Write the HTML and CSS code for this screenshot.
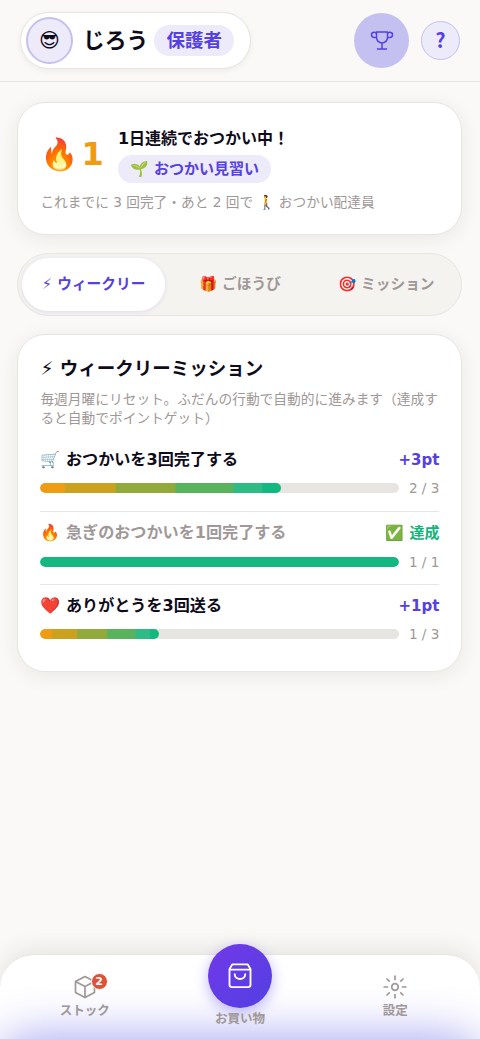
FILE: index.html
```html
<!DOCTYPE html>
<html lang="ja">
<head>
<meta charset="utf-8">
<meta name="viewport" content="width=device-width, initial-scale=1">
<title>ウィークリーミッション</title>
<link rel="stylesheet" href="styles.css">
</head>
<body>
<div class="app">
  <header class="header">
    <div class="profile">
      <span class="avatar">😎︎</span>
      <span class="name">じろう</span>
      <span class="role">保護者</span>
    </div>
    <div class="actions">
      <button class="trophy" aria-label="トロフィー">
        <svg width="24" height="24" viewBox="0 0 24 24" fill="none" stroke="currentColor" stroke-width="1.5" stroke-linecap="round" stroke-linejoin="round"><path d="M6.500 3h11v5.500a5.500 5.500 0 0 1-11 0zM12 14.500v5M7.500 20h9M6.500 8.500H4.200A2.700 2.700 0 0 1 1.500 5.800c0-1.600 1.300-2.500 2.700-2.500 1.400 0 2.200.7 2.200 2M17.600 5.300c0-1.300.8-2 2.100-2 1.600 0 2.800.9 2.800 2.500a2.700 2.700 0 0 1-2.700 2.700h-2.200"/></svg>
      </button>
      <button class="help">?</button>
    </div>
  </header>
  <main class="main">
    <section class="card streak">
      <div class="streak-row">
        <div class="streak-count"><span class="flame">🔥</span><span>1</span></div>
        <div class="streak-info">
          <div class="streak-title">1日連続でおつかい中！</div>
          <span class="rank">🌱 おつかい見習い</span>
        </div>
      </div>
      <p class="note">これまでに 3 回完了・あと 2 回で 🚶 おつかい配達員</p>
    </section>
    <nav class="tabs">
      <button class="tab active">⚡︎ ウィークリー</button>
      <button class="tab">🎁 ごほうび</button>
      <button class="tab">🎯 ミッション</button>
    </nav>
    <section class="card weekly">
      <h1 class="title">⚡︎ ウィークリーミッション</h1>
      <p class="desc">毎週月曜にリセット。ふだんの行動で自動的に進みます（達成すると自動でポイントゲット）</p>
      <ul class="missions">
        <li class="mission">
          <div class="mission-head"><span>🛒 おつかいを3回完了する</span><span class="points">+3pt</span></div>
          <div class="progress"><div class="track"><div class="fill" style="width:67%"></div></div><span class="count">2 / 3</span></div>
        </li>
        <li class="mission done">
          <div class="mission-head"><span>🔥 急ぎのおつかいを1回完了する</span><span class="points">✅ 達成</span></div>
          <div class="progress"><div class="track"><div class="fill" style="width:100%"></div></div><span class="count">1 / 1</span></div>
        </li>
        <li class="mission">
          <div class="mission-head"><span>❤️ ありがとうを3回送る</span><span class="points">+1pt</span></div>
          <div class="progress"><div class="track"><div class="fill" style="width:33%"></div></div><span class="count">1 / 3</span></div>
        </li>
      </ul>
    </section>
  </main>
  <nav class="bottom">
    <a class="nav-item">
      <span class="nav-icon">
        <svg width="24" height="24" viewBox="0 0 24 24" fill="none" stroke="currentColor" stroke-width="1.700" stroke-linecap="round" stroke-linejoin="round"><path d="M12 1.500 21.500 6.500v11L12 22.500 2.500 17.500v-11zM2.500 6.500l9.500 5 9.500-5M12 11.500v11"/></svg>
        <span class="badge">2</span>
      </span>
      <span>ストック</span>
    </a>
    <a class="nav-item shop">
      <span class="shop-circle">
        <svg width="28" height="28" viewBox="0 0 24 24" fill="none" stroke="currentColor" stroke-width="1.600" stroke-linecap="round" stroke-linejoin="round"><path d="M5.500 2h13L21 6v13.500a2 2 0 0 1-2 2H5a2 2 0 0 1-2-2V6zM3 6.500h18M7.500 10.500c.2 5.400 8.800 5.400 9 0"/></svg>
      </span>
      <span>お買い物</span>
    </a>
    <a class="nav-item">
      <span class="nav-icon">
        <svg width="24" height="24" viewBox="0 0 24 24" fill="none" stroke="currentColor" stroke-width="1.700" stroke-linecap="round"><circle cx="12" cy="12" r="3.300"/><path d="M12 1.200v3.300M12 19.500v3.300M1.200 12H4.500M19.500 12h3.300M4 4l2.200 2.200M17.800 17.800L20 20M4 20l2.200-2.200M17.800 6.200L20 4"/></svg>
      </span>
      <span>設定</span>
    </a>
    <span class="glow"></span>
  </nav>
</div>
</body>
</html>
```
FILE: styles.css
```css
* { box-sizing: border-box; }
body { margin: 0; background: #faf9f7; color: #100b1a; font-family: "DejaVu Sans", "Noto Sans CJK JP", sans-serif; }
button { border: 0; margin: 0; padding: 0; background: none; font: inherit; color: inherit; }
svg { display: block; }
.app { height: 1039px; display: flex; flex-direction: column; overflow: hidden; }

.header { height: 82px; flex: none; display: flex; align-items: center; justify-content: space-between; padding: 0 20px; border-bottom: 1px solid #e7e5e2; }
.profile { height: 57px; width: 231px; display: flex; align-items: center; padding: 0 5px; background: #fff; border: 1px solid #e7e5e2; border-radius: 29px; box-shadow: 0 2px 6px rgba(40, 35, 30, .06); }
.avatar { width: 47px; height: 47px; border: 2px solid #c4c1f1; border-radius: 50%; background: #edeafa; display: grid; place-items: center; padding-bottom: 2px; font-size: 20px; line-height: 1; }
.name { margin-left: 10px; font-size: 21.800px; font-weight: 700; line-height: 1; white-space: nowrap; }
.role { margin-left: 6px; height: 31px; padding: 0 12px; border-radius: 16px; background: #edeafa; color: #5540e3; font-size: 18.500px; line-height: 31px; font-weight: 600; white-space: nowrap; }
.actions { display: flex; align-items: center; gap: 12px; }
.trophy { width: 55px; height: 55px; border-radius: 50%; background: #c4c1f1; color: #5540e3; display: grid; place-items: center; }
.help { width: 39px; height: 39px; padding-bottom: 2px; border: 1px solid #c4c1f1; border-radius: 50%; background: #edeafa; color: #5540e3; font: 700 20px "Noto Sans CJK JP", sans-serif; line-height: 1; }

.main { flex: 1; display: flex; flex-direction: column; gap: 18px; padding: 20px 17.600px 0 17.400px; }
.card { background: #fff; border: 1px solid #e7e5e2; border-radius: 28px; box-shadow: 0 4px 20px rgba(40, 35, 30, .08); }
.streak { height: 132.500px; flex: none; padding: 25px 22px 0; }
.streak-row { display: flex; gap: 16px; height: 56px; }
.streak-count { display: flex; align-items: center; gap: 2px; width: 61.500px; height: 52px; font-size: 32px; line-height: 1; font-weight: 700; color: #f09c12; }
.flame { font-size: 31px; }
.streak-title { font-size: 16px; font-weight: 700; line-height: 22px; margin-bottom: 5px; }
.rank { display: block; width: max-content; height: 28px; line-height: 28px; padding: 0 12px; border-radius: 14px; background: #edeafa; color: #5540e3; font-size: 15px; font-weight: 700; }
.note { margin: 9px 0 0; font-size: 13.700px; line-height: 19px; color: #a09797; white-space: nowrap; }

.tabs { height: 63.500px; flex: none; display: flex; gap: 4px; padding: 4px; background: #f4f3f0; border: 1px solid #e7e5e2; border-radius: 32px; }
.tab { flex: 1; padding-bottom: 4px; border-radius: 28px; font-size: 14.700px; font-weight: 700; color: #a09797; white-space: nowrap; }
.tab.active { background: #fff; color: #5540e3; box-shadow: 0 1px 4px rgba(85, 64, 227, .13); }

.weekly { height: 338px; flex: none; padding: 19.500px 22px 0; }
.title { margin: 0; font-size: 18.500px; line-height: 28px; font-weight: 700; }
.desc { margin: 7px 0 11px; font-size: 13.720px; line-height: 19px; color: #a09797; }
.missions { list-style: none; margin: 0; padding: 0; }
.mission { height: 72.500px; padding-top: 9px; }
.mission + .mission { border-top: 1px solid #e7e5e2; }
.mission-head { display: flex; justify-content: space-between; height: 24px; line-height: 24px; font-size: 16.100px; font-weight: 700; white-space: nowrap; }
.points { color: #5540e3; font-size: 15px; }
.done .mission-head { color: #a09797; }
.done .points { color: #14b37c; }
.progress { display: flex; align-items: center; gap: 10px; height: 20px; margin-top: 6.500px; }
.track { flex: 1; height: 10px; border-radius: 5px; background: #e7e5e2; overflow: hidden; }
.fill { height: 100%; border-radius: 5px; background: linear-gradient(90deg, #f09c12 0 10%, #cba11e 10.500% 31%, #92aa3b 31.500% 56%, #59b35d 56.500% 80%, #2ebb86 80.500% 92%, #12b880 92.500%); }
.done .fill { background: #12b880; }
.count { font-size: 13.600px; color: #a09797; }

.bottom { position: relative; height: 85px; flex: none; display: grid; grid-template-columns: repeat(3, 1fr); padding: 0 7px; background: #fff; border-top: 1px solid #e7e5e2; border-radius: 34px 34px 0 0; box-shadow: 0 -4px 24px rgba(40, 35, 30, .1); }
.nav-item { position: relative; z-index: 1; display: flex; flex-direction: column; align-items: center; padding-top: 20px; gap: 3px; font-size: 12.500px; font-weight: 700; line-height: 18px; color: #a09797; }
.nav-icon { position: relative; }
.badge { position: absolute; left: 18px; top: -2px; width: 17px; height: 17px; border: 1px solid #fff; border-radius: 50%; background: #df5134; color: #fff; font-size: 11px; line-height: 15px; text-align: center; }
.shop { padding-top: 0; margin-top: -11px; gap: 2px; }
.shop-circle { width: 64px; height: 64px; border-radius: 50%; display: grid; place-items: center; color: #fff; background: linear-gradient(135deg, #7139e9, #533fe2); box-shadow: 0 4px 14px rgba(85, 64, 227, .38); }
.glow { position: absolute; left: 0; right: 0; top: 85px; height: 64px; border-radius: 32px; box-shadow: 0 0 48px 4px #a9a7f2; }
```
